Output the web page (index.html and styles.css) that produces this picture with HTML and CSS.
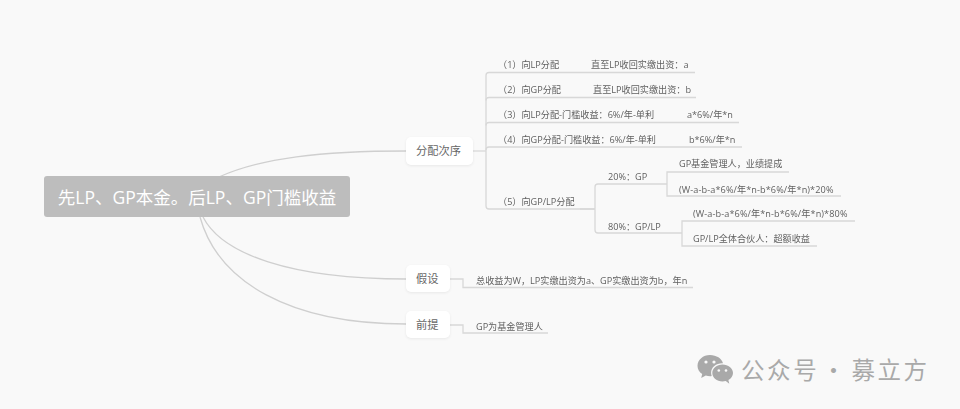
FILE: index.html
```html
<!DOCTYPE html>
<html lang="zh-CN">
<head>
<meta charset="utf-8">
<title>先LP、GP本金。后LP、GP门槛收益</title>
<link rel="stylesheet" href="styles.css">
</head>
<body>
<main class="canvas">
  <svg class="links" width="960" height="409" viewBox="0 0 960 409" aria-hidden="true">
    <g class="curve">
      <path d="M220 176.5C262 158 320 151 406 151"/>
      <path d="M203 217C222 254 290 279 406 279"/>
      <path d="M200 217C218 282 290 324 406 324"/>
    </g>
    <g class="line">
      <path d="M473 151H486"/>
      <path d="M695 72.5H489Q486 72.5 486 75.5V206Q486 209 489 209H595"/>
      <path d="M696 97.5H489Q486 97.5 486 100.5"/>
      <path d="M739 122.5H489Q486 122.5 486 125.5"/>
      <path d="M742 147H489Q486 147 486 150"/>
      <path d="M598 184Q595 184 595 187V230Q595 233 598 233H615M580 209H595M598 184H667M615 233H682"/>
      <path d="M789 172H667V196H841"/>
      <path d="M855 221H682V246H817"/>
      <path d="M450 279H463V287.5H693"/>
      <path d="M450 325H463V333H548"/>
    </g>
  </svg>

  <div class="root">先LP、GP本金。后LP、GP门槛收益</div>
  <div class="topic t-order">分配次序</div>
  <div class="topic t-assume">假设</div>
  <div class="topic t-premise">前提</div>

  <span class="leaf a1">（1）向LP分配</span>
  <span class="leaf a2">直至LP收回实缴出资：a</span>
  <span class="leaf b1">（2）向GP分配</span>
  <span class="leaf b2">直至LP收回实缴出资：b</span>
  <span class="leaf c1">（3）向LP分配-门槛收益：6%/年-单利</span>
  <span class="leaf c2">a*6%/年*n</span>
  <span class="leaf d1">（4）向GP分配-门槛收益：6%/年-单利</span>
  <span class="leaf d2">b*6%/年*n</span>
  <span class="leaf e1">（5）向GP/LP分配</span>
  <span class="leaf f1">20%：GP</span>
  <span class="leaf f2">80%：GP/LP</span>
  <span class="leaf g1">GP基金管理人，业绩提成</span>
  <span class="leaf g2 formula">(W-a-b-a*6%/年*n-b*6%/年*n)*20%</span>
  <span class="leaf h1 formula">(W-a-b-a*6%/年*n-b*6%/年*n)*80%</span>
  <span class="leaf h2">GP/LP全体合伙人：超额收益</span>
  <span class="leaf i1">总收益为W，LP实缴出资为a、GP实缴出资为b，年n</span>
  <span class="leaf j1">GP为基金管理人</span>

  <div class="mark">
    <svg class="mark-icon" width="37" height="30" viewBox="0 0 37 30" aria-hidden="true">
      <path class="bubble" d="M13 0C6 0 0.500 4.800 0.500 10.700C0.500 14.100 2.300 17 5.200 19L4.200 23L8.800 20.500C10.200 20.900 11.600 21.200 13 21.200C13.600 21.200 14.100 21.100 14.700 21C14.300 19.900 14.100 18.800 14.100 17.600C14.100 12.300 19 8.200 25.200 8.200C25.500 8.200 25.800 8.200 26 8.200C24.800 3.600 19.400 0 13 0Z"/>
      <circle class="eye" cx="9" cy="7" r="1.600"/>
      <circle class="eye" cx="17" cy="7" r="1.600"/>
      <path class="bubble" d="M25.500 9.500C19.800 9.500 15.300 13.300 15.300 18C15.300 22.700 19.800 26.500 25.500 26.500C26.600 26.500 27.700 26.300 28.700 26L32.300 28.800L31.400 25C34.200 23.400 36 20.900 36 18C36 13.300 31.200 9.500 25.500 9.500Z"/>
      <circle class="eye" cx="21.800" cy="15.500" r="1.300"/>
      <circle class="eye" cx="29" cy="15.500" r="1.300"/>
    </svg>
    <span class="mark-text">公众号<span class="mark-dot">·</span>募立方</span>
  </div>
</main>
</body>
</html>
```

FILE: styles.css
```css
* { box-sizing: border-box; }
html, body { margin: 0; padding: 0; }
body {
  width: 960px;
  height: 409px;
  overflow: hidden;
  background: #f9f9f9;
  font-family: "Open Sans", "Noto Sans CJK SC", sans-serif;
}
.canvas { position: relative; width: 960px; height: 409px; }
.links { position: absolute; left: 0; top: 0; fill: none; }
.curve path { stroke: #cfcfcf; stroke-width: 1.3; fill: none; }
.line path { stroke: #d8d8d8; stroke-width: 1.3; fill: none; }

.root {
  position: absolute;
  left: 44px;
  top: 176px;
  width: 306px;
  height: 41px;
  background: #bdbdbd;
  border-radius: 3px;
  color: #fff;
  font-size: 17.5px;
  line-height: 43px;
  text-align: center;
  white-space: nowrap;
}
.topic {
  position: absolute;
  left: 406px;
  background: #fff;
  border-radius: 5px;
  box-shadow: 0 1px 3px rgba(0, 0, 0, 0.07);
  color: #666;
  font-size: 11.25px;
  line-height: 27px;
  height: 27px;
  padding: 0 10px;
  white-space: nowrap;
}
.t-order { top: 137px; width: 67px; height: 28px; }
.t-assume { top: 265px; width: 44px; }
.t-premise { top: 311px; width: 44px; }

.leaf {
  position: absolute;
  height: 14px;
  margin-top: 1px;
  line-height: 14px;
  font-size: 9.15px;
  color: #5f5f5f;
  white-space: nowrap;
  filter: blur(0.25px);
}
.formula { letter-spacing: 0.1px; }
.a1 { left: 498px; top: 57px; }
.a2 { left: 591px; top: 57px; }
.b1 { left: 498px; top: 82px; }
.b2 { left: 593px; top: 82px; }
.c1 { left: 498px; top: 107px; }
.c2 { left: 687px; top: 107px; }
.d1 { left: 498px; top: 132px; }
.d2 { left: 689px; top: 132px; }
.e1 { left: 498px; top: 194px; }
.f1 { left: 608px; top: 169px; }
.f2 { left: 608px; top: 219px; }
.g1 { left: 679px; top: 156px; }
.g2 { left: 679px; top: 182px; }
.h1 { left: 693px; top: 206px; }
.h2 { left: 693px; top: 231px; }
.i1 { left: 476px; top: 273px; }
.j1 { left: 476px; top: 319px; }

.mark {
  position: absolute;
  left: 697px;
  top: 355px;
  display: flex;
  align-items: center;
  gap: 8px;
  height: 30px;
}
.bubble { fill: #a9a9a9; }
.eye { fill: #f9f9f9; }
.mark-icon { flex: none; }
.mark-text {
  color: #a9a9a9;
  font-size: 23.5px;
  letter-spacing: 2.6px;
  line-height: 30px;
  margin-top: -2px;
  margin-left: -1px;
  white-space: nowrap;
  font-family: "Noto Sans CJK SC", sans-serif;
}
.mark-dot { margin: 0 3.5px 0 2.5px; }
```
